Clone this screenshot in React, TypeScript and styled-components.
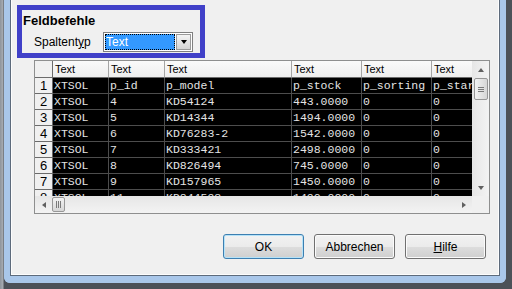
import styled, { createGlobalStyle, css } from 'styled-components'

const GlobalStyle = createGlobalStyle`
  html, body { margin: 0; padding: 0; }
  body {
    width: 512px;
    height: 289px;
    overflow: hidden;
    font-family: "Liberation Sans", Arial, sans-serif;
    font-size: 12px;
    color: #000;
  }
`

const Window = styled.div`
  width: 512px;
  height: 289px;
  box-sizing: border-box;
  display: flex;
  padding: 0 6px 6px 4px;
  background: linear-gradient(90deg, #8e949c 0, #a7acb2 3px, #4c5158 4px, #4c5158 100%);
`

const Frame = styled.div`
  flex: 1;
  display: flex;
  border: 6px solid #a9c7ea;
  border-top: 0;
  border-bottom-width: 7px;
  border-radius: 0 0 6px 6px;
`

const Client = styled.div`
  flex: 1;
  display: flex;
  flex-direction: column;
  align-items: flex-start;
  background: #f0f0f0;
  border: 1px solid #5d6b7c;
  border-top: 0;
  box-shadow: inset 1px 0 #fdfdfd, inset -1px -1px #fdfdfd;
  padding: 5px 0 0 6px;
`

const Highlight = styled.div`
  width: 188px;
  height: 53px;
  box-sizing: border-box;
  border: 5px solid #4040c8;
  padding: 3px 0 0 1px;
`

const GroupTitle = styled.div`
  font-weight: bold;
  font-size: 13px;
  line-height: 15px;
`

const FieldRow = styled.div`
  display: flex;
  align-items: center;
  margin-top: 4px;
  padding-left: 11px;
`

const Label = styled.span`
  width: 69px;
  line-height: 20px;
`

const Combo = styled.div`
  width: 90px;
  height: 20px;
  box-sizing: border-box;
  border: 1px solid #7f7f7f;
  background: #fff;
  display: flex;
  padding: 1px;
`

const ComboValue = styled.div`
  flex: 1;
  background: #3399ff;
  color: #fff;
  line-height: 16px;
  padding-left: 1px;
  outline: 1px dotted #000;
  outline-offset: -1px;
`

const ComboButton = styled.div`
  width: 15px;
  margin-left: 1px;
  box-sizing: border-box;
  border: 1px solid #9a9a9a;
  background: linear-gradient(#f4f4f4, #e4e4e4 50%, #d4d4d4);
  display: flex;
  align-items: center;
  justify-content: center;
`

const Arrow = styled.span<{ $dir: 'up' | 'down' | 'left' | 'right'; $color?: string }>`
  width: 0;
  height: 0;
  ${({ $dir, $color = '#606060' }) =>
    $dir === 'up' || $dir === 'down'
      ? css`
          border-left: 3.5px solid transparent;
          border-right: 3.5px solid transparent;
          ${$dir === 'up' ? 'border-bottom' : 'border-top'}: 4px solid ${$color};
        `
      : css`
          border-top: 3.5px solid transparent;
          border-bottom: 3.5px solid transparent;
          ${$dir === 'left' ? 'border-right' : 'border-left'}: 4px solid ${$color};
        `}
`

const GridFrame = styled.div`
  margin: 2px 0 0 17px;
  width: 456px;
  box-sizing: border-box;
  border: 1px solid #8e8f8f;
  display: grid;
  grid-template-columns: 437px 17px;
  grid-template-rows: 135px 17px;
  background: #f0f0f0;
`

const DataArea = styled.div`
  overflow: hidden;
  display: grid;
  grid-template-columns: 18px 56px 56px 127px 70px 70px 80px;
  grid-template-rows: 17px;
  grid-auto-rows: 16px;
  background: #000;
`

type CellKind = 'corner' | 'head' | 'num' | 'data'

const Cell = styled.div<{ $kind: CellKind }>`
  box-sizing: border-box;
  white-space: nowrap;
  overflow: hidden;
  border-right: 1px solid #4d4d4d;
  border-bottom: 1px solid #4d4d4d;
  ${({ $kind }) => {
    if ($kind === 'head')
      return css`
        background: linear-gradient(#fafafa, #eeeeee);
        border-right-color: #a5a5a5;
        border-bottom-color: #6b6b6b;
        font-size: 11px;
        line-height: 16px;
        padding-left: 2px;
      `
    if ($kind === 'corner')
      return css`
        background: #f0f0f0;
        border-right-color: #6b6b6b;
        border-bottom-color: #6b6b6b;
      `
    if ($kind === 'num')
      return css`
        background: #f0f0f0;
        border-right-color: #6b6b6b;
        border-bottom-color: #6b6b6b;
        font-size: 13px;
        line-height: 15px;
        text-align: center;
      `
    return css`
      color: #e4e4e4;
      font-family: "Liberation Mono", "Courier New", monospace;
      font-size: 11.5px;
      line-height: 15px;
      padding-left: 1px;
    `
  }}
`

const VScroll = styled.div`
  display: flex;
  flex-direction: column;
  align-items: center;
  background: linear-gradient(90deg, #e6e6e6, #f3f3f3);
`

const HScroll = styled.div`
  display: flex;
  align-items: center;
  background: linear-gradient(#e6e6e6, #f3f3f3);
`

const Corner = styled.div`
  background: #f0f0f0;
`

const ScrollBtn = styled.div<{ $size: string }>`
  width: 17px;
  height: ${({ $size }) => $size};
  display: flex;
  align-items: center;
  justify-content: center;
  flex: none;
`

const VThumb = styled.div`
  width: 14px;
  height: 22px;
  box-sizing: border-box;
  border: 1px solid #979797;
  border-radius: 2px;
  background: linear-gradient(90deg, #f2f2f2, #e4e4e4 50%, #d6d6d6);
  display: flex;
  flex-direction: column;
  align-items: center;
  justify-content: center;
  gap: 1px;
`

const HThumb = styled.div`
  width: 13px;
  height: 15px;
  box-sizing: border-box;
  border: 1px solid #979797;
  border-radius: 2px;
  background: linear-gradient(#f2f2f2, #e4e4e4 50%, #d6d6d6);
  display: flex;
  align-items: center;
  justify-content: center;
  gap: 1px;
`

const Grip = styled.span<{ $vertical?: boolean }>`
  background: #7a7a7a;
  ${({ $vertical }) => ($vertical ? 'width: 1px; height: 7px;' : 'width: 6px; height: 1px;')}
`

const Spacer = styled.div`
  flex: 1;
`

const ButtonRow = styled.div`
  align-self: stretch;
  display: flex;
  justify-content: flex-end;
  gap: 10px;
  margin-top: 20px;
  padding-right: 13px;
`

const Button = styled.div<{ $default?: boolean }>`
  width: 81px;
  height: 25px;
  box-sizing: border-box;
  border: 1px solid ${({ $default }) => ($default ? '#3c7fb1' : '#707070')};
  border-radius: 3px;
  background: linear-gradient(#f2f2f2, #ebebeb 50%, #dddddd 51%, #cfcfcf);
  box-shadow: inset 0 0 0 1px ${({ $default }) => ($default ? '#b5e2f8' : '#fbfbfb')};
  display: flex;
  align-items: center;
  justify-content: center;
  font-size: 12px;
`

const heads = ['', 'Text', 'Text', 'Text', 'Text', 'Text', 'Text']

const rows = [
  ['1', 'XTSOL', 'p_id', 'p_model', 'p_stock', 'p_sorting', 'p_startpage'],
  ['2', 'XTSOL', '4', 'KD54124', '443.0000', '0', '0'],
  ['3', 'XTSOL', '5', 'KD14344', '1494.0000', '0', '0'],
  ['4', 'XTSOL', '6', 'KD76283-2', '1542.0000', '0', '0'],
  ['5', 'XTSOL', '7', 'KD333421', '2498.0000', '0', '0'],
  ['6', 'XTSOL', '8', 'KD826494', '745.0000', '0', '0'],
  ['7', 'XTSOL', '9', 'KD157965', '1450.0000', '0', '0'],
  ['8', 'XTSOL', '11', 'KD844593', '1490.0000', '0', '0'],
]

const App = () => (
  <>
    <GlobalStyle />
    <Window>
      <Frame>
        <Client>
          <Highlight>
            <GroupTitle>Feldbefehle</GroupTitle>
            <FieldRow>
              <Label>
                Spaltent<u>y</u>p
              </Label>
              <Combo>
                <ComboValue>Text</ComboValue>
                <ComboButton>
                  <Arrow $dir="down" $color="#000" />
                </ComboButton>
              </Combo>
            </FieldRow>
          </Highlight>

          <GridFrame>
            <DataArea>
              {heads.map((h, i) => (
                <Cell key={'h' + i} $kind={i === 0 ? 'corner' : 'head'}>
                  {h}
                </Cell>
              ))}
              {rows.map(r =>
                r.map((v, i) => (
                  <Cell key={r[0] + '-' + i} $kind={i === 0 ? 'num' : 'data'}>
                    {v}
                  </Cell>
                ))
              )}
            </DataArea>
            <VScroll>
              <ScrollBtn $size="17px">
                <Arrow $dir="up" />
              </ScrollBtn>
              <VThumb>
                <Grip />
                <Grip />
                <Grip />
              </VThumb>
              <Spacer />
              <ScrollBtn $size="17px">
                <Arrow $dir="down" />
              </ScrollBtn>
            </VScroll>
            <HScroll>
              <ScrollBtn $size="17px">
                <Arrow $dir="left" />
              </ScrollBtn>
              <HThumb>
                <Grip $vertical />
                <Grip $vertical />
                <Grip $vertical />
              </HThumb>
              <Spacer />
              <ScrollBtn $size="17px">
                <Arrow $dir="right" />
              </ScrollBtn>
            </HScroll>
            <Corner />
          </GridFrame>

          <ButtonRow>
            <Button $default>OK</Button>
            <Button>Abbrechen</Button>
            <Button>
              <span>
                <u>H</u>ilfe
              </span>
            </Button>
          </ButtonRow>
        </Client>
      </Frame>
    </Window>
  </>
)

export default App
